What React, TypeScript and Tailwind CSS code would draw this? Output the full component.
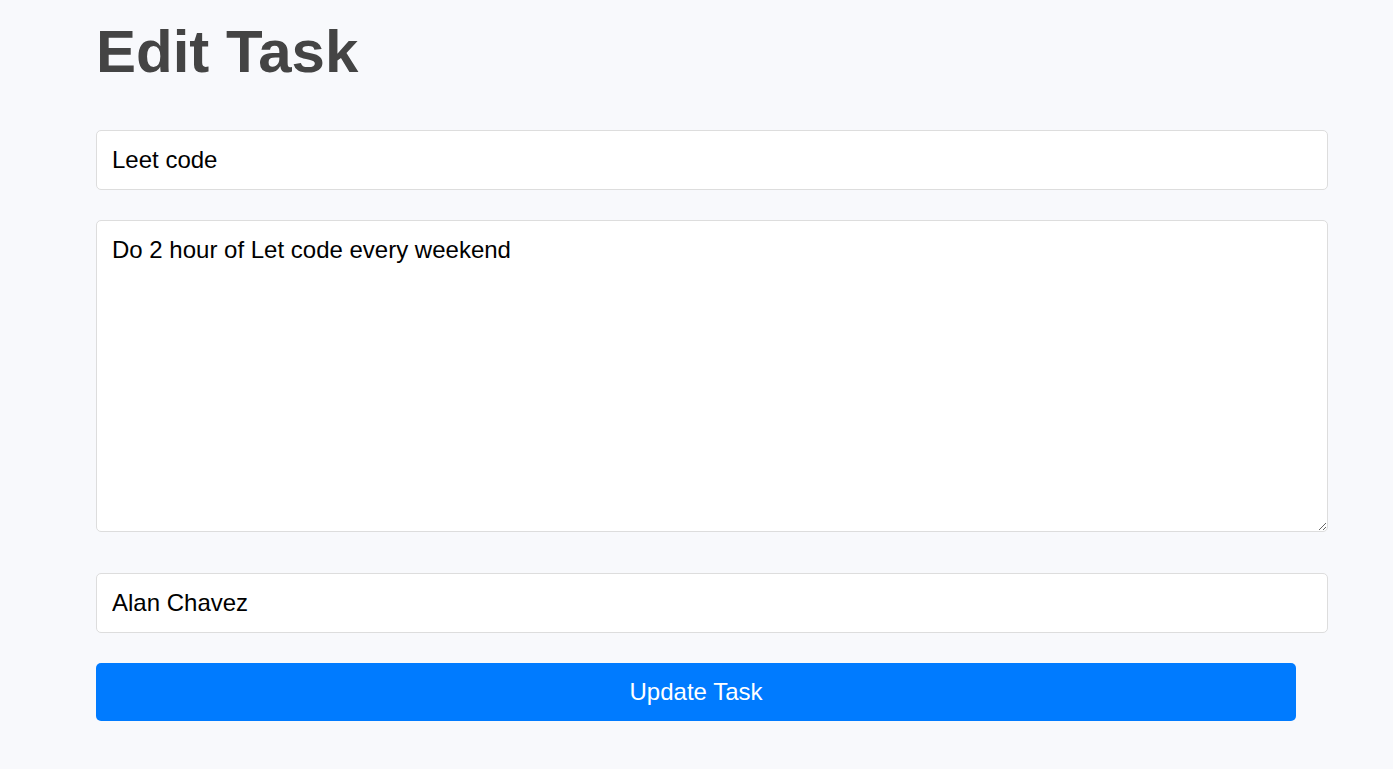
export default function App() {
  return (
    <div className="min-h-screen bg-[#f8f9fc] font-['Liberation_Sans',Arial,sans-serif]">
      <div className="ml-[96px] w-[1200px] pt-[17px]">
        <h1 className="text-[60px] font-bold leading-[69px] text-[#444444]">Edit Task</h1>

        <form className="mt-[44px] flex flex-col" onSubmit={(e) => e.preventDefault()}>
          <input
            type="text"
            defaultValue="Leet code"
            className="h-[60px] w-[1232px] rounded-[5px] border border-[#dddddd] bg-white px-[15px] text-[24px] text-black outline-none"
          />
          <textarea
            defaultValue="Do 2 hour of Let code every weekend"
            className="mt-[30px] h-[312px] w-[1232px] rounded-[5px] border border-[#dddddd] bg-white px-[15px] py-[15px] text-[24px] leading-[28px] text-black outline-none"
          />
          <input
            type="text"
            defaultValue="Alan Chavez"
            className="mt-[41px] h-[60px] w-[1232px] rounded-[5px] border border-[#dddddd] bg-white px-[15px] text-[24px] text-black outline-none"
          />
          <button
            type="submit"
            className="mt-[30px] h-[58px] w-[1200px] rounded-[5px] bg-[#007bff] text-[24px] text-white"
          >
            Update Task
          </button>
        </form>
      </div>
    </div>
  );
}
